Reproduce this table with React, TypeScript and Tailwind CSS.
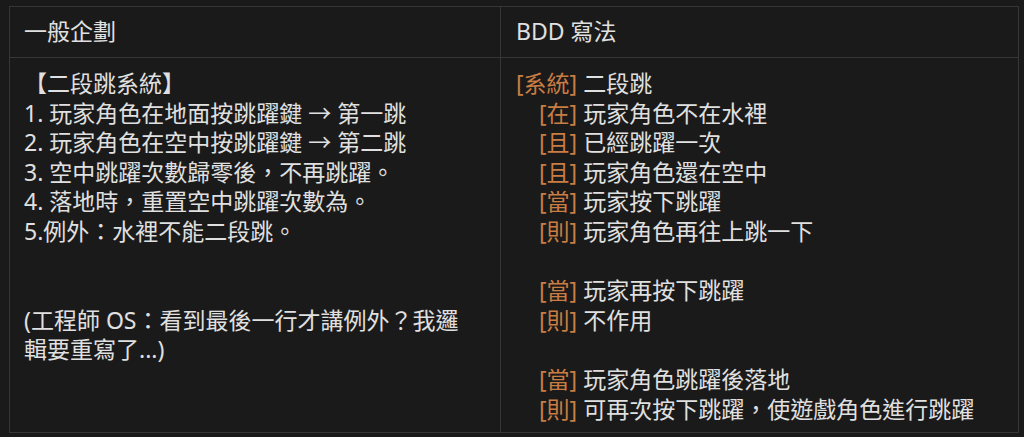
import React from "react";

const font = {
  fontFamily: '"Noto Sans", "Noto Sans CJK TC", sans-serif',
};

type Row = { tag?: string; text?: string; indent?: boolean };

const bdd: Row[] = [
  { tag: "系統", text: "二段跳" },
  { tag: "在", text: "玩家角色不在水裡", indent: true },
  { tag: "且", text: "已經跳躍一次", indent: true },
  { tag: "且", text: "玩家角色還在空中", indent: true },
  { tag: "當", text: "玩家按下跳躍", indent: true },
  { tag: "則", text: "玩家角色再往上跳一下", indent: true },
  {},
  { tag: "當", text: "玩家再按下跳躍", indent: true },
  { tag: "則", text: "不作用", indent: true },
  {},
  { tag: "當", text: "玩家角色跳躍後落地", indent: true },
  { tag: "則", text: "可再次按下跳躍，使遊戲角色進行跳躍", indent: true },
];

const plain = [
  "【二段跳系統】",
  "1. 玩家角色在地面按跳躍鍵 → 第一跳",
  "2. 玩家角色在空中按跳躍鍵 → 第二跳",
  "3. 空中跳躍次數歸零後，不再跳躍。",
  "4. 落地時，重置空中跳躍次數為。",
  "5.例外：水裡不能二段跳。",
  "",
  "",
];

export default function App() {
  return (
    <div
      className="w-[1024px] h-[437px] bg-[#1a1a1a] pt-[6px] pl-[9px] overflow-hidden"
      style={font}
    >
      <div className="w-[1010px] border border-[#363636] text-[#e0e0e0] text-[23px] leading-[29.6px]">
        <div className="grid grid-cols-[491px_1fr] h-[51px] border-b border-[#363636]">
          <div className="flex items-center pl-[14px] border-r border-[#363636]">一般企劃</div>
          <div className="flex items-center pl-[15px]">BDD 寫法</div>
        </div>
        <div className="grid grid-cols-[491px_1fr] h-[374px]">
          <div className="pl-[14px] pt-[11px] border-r border-[#363636]">
            {plain.map((l, i) => (
              <div key={i} className="h-[29.6px] whitespace-pre">
                {l}
              </div>
            ))}
            <div className="w-[455px]">(工程師 OS：看到最後一行才講例外？我邏輯要重寫了...)</div>
          </div>
          <div className="pl-[15px] pt-[11px]">
            {bdd.map((r, i) => (
              <div key={i} className={"h-[29.6px] whitespace-pre " + (r.indent ? "pl-[23px]" : "")}>
                {r.tag ? (
                  <>
                    <span className="text-[#c97d42]">[{r.tag}]</span> {r.text}
                  </>
                ) : null}
              </div>
            ))}
          </div>
        </div>
      </div>
    </div>
  );
}
